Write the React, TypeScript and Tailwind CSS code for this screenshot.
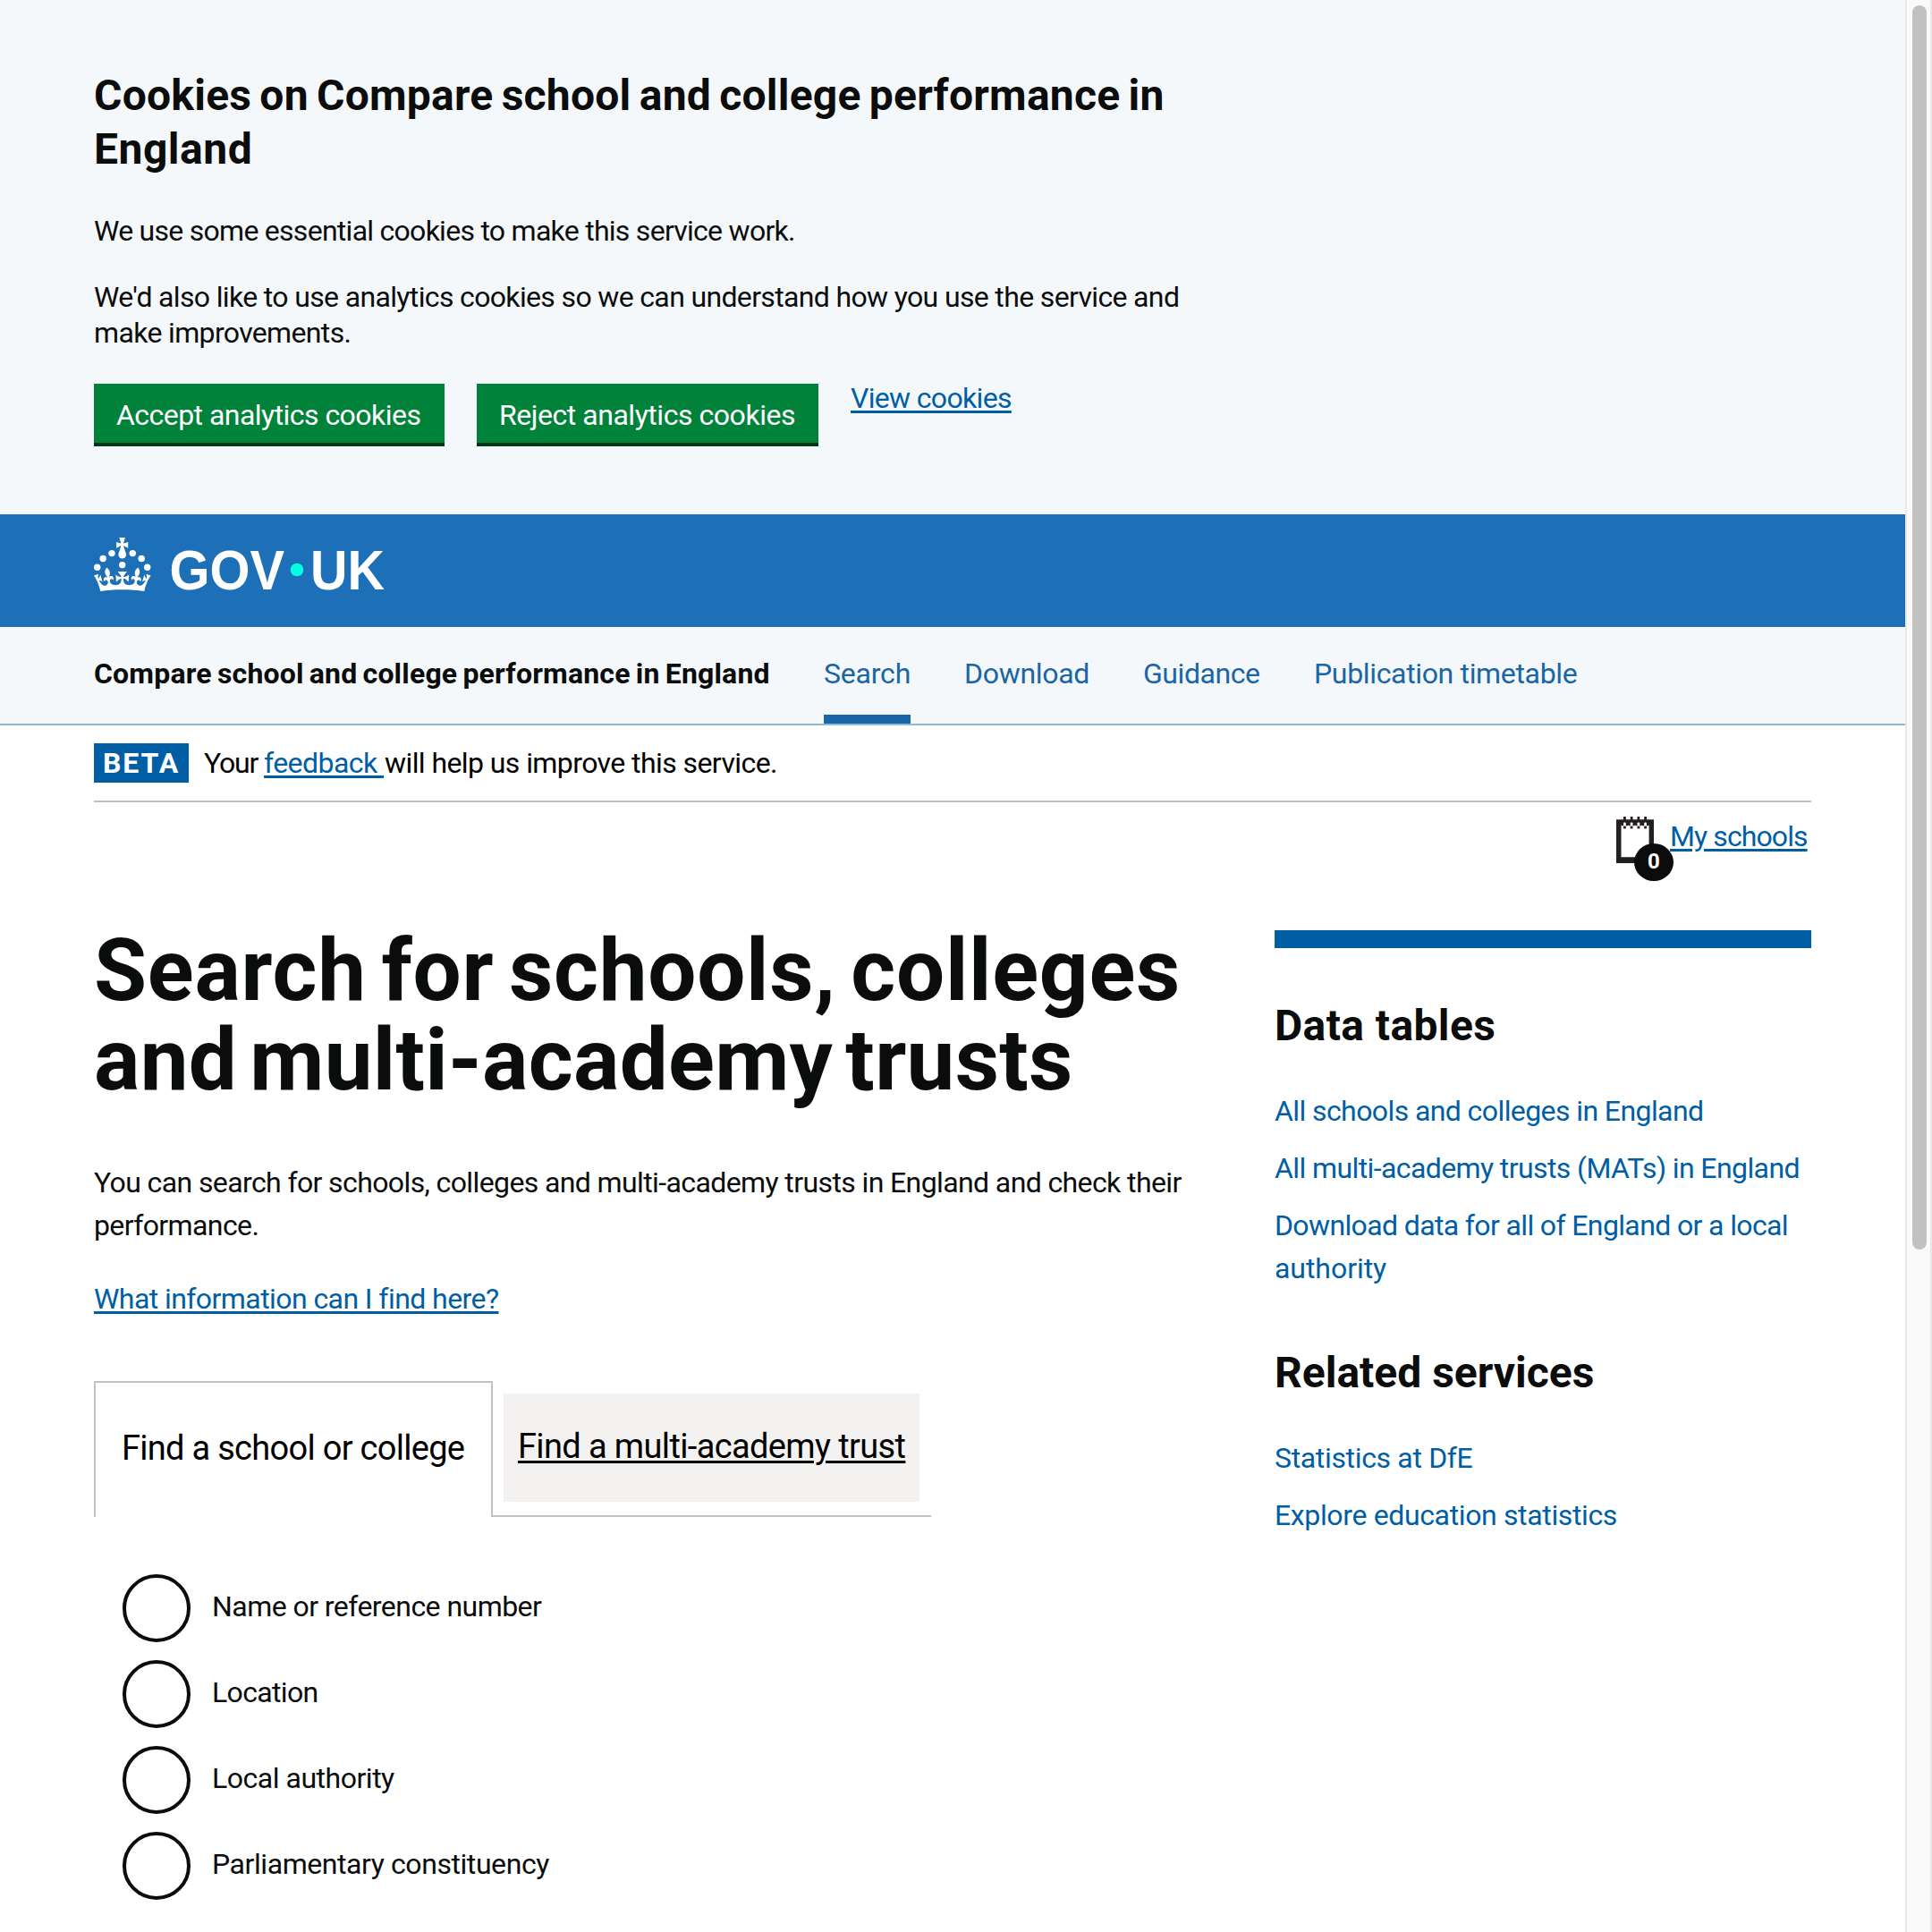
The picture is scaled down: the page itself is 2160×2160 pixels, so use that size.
import type { ReactNode } from "react";

function CookieBanner() {
  return (
    <section className="h-[575px] bg-[#f4f8fb] pt-[77px] pl-[105px] whitespace-nowrap">
      <h2 className="text-[48px] leading-[60px] font-bold">
        <span className="block tracking-[0.24px] [word-spacing:-3px]">Cookies on Compare school and college performance in</span>
        <span className="block tracking-[0.5px]">England</span>
      </h2>
      <p className="mt-[41px] leading-[40px] tracking-[-0.73px]">We use some essential cookies to make this service work.</p>
      <p className="mt-[34px] leading-[40px] tracking-[-0.65px]">
        We'd also like to use analytics cookies so we can understand how you use the service and
        <br />
        make improvements.
      </p>
      <div className="mt-[37px] flex items-start gap-9">
        <button className="h-[70px] w-[392px] border-b-4 border-[#003618] bg-[#00823b] pt-[3px] pl-[25px] text-left leading-[40px] tracking-[-0.54px] text-white">
          Accept analytics cookies
        </button>
        <button className="h-[70px] w-[382px] border-b-4 border-[#003618] bg-[#00823b] pt-[3px] pl-[25px] text-left leading-[40px] tracking-[-0.46px] text-white">
          Reject analytics cookies
        </button>
        <a className="leading-[32px] tracking-[-0.67px] text-[#005ea5] underline decoration-3 underline-offset-[3px]">View cookies</a>
      </div>
    </section>
  );
}

function Logo() {
  return (
    <svg width="328" height="60" viewBox="0 0 328 60" fill="#fff" className="overflow-visible">
      <circle cx="20" cy="17.6" r="3.7" />
      <circle cx="10.2" cy="23.5" r="3.7" />
      <circle cx="3.7" cy="33.2" r="3.7" />
      <circle cx="31.7" cy="30.6" r="3.7" />
      <circle cx="43.3" cy="17.6" r="3.7" />
      <circle cx="53.2" cy="23.5" r="3.7" />
      <circle cx="59.7" cy="33.2" r="3.7" />
      <path d="M33.1,9.8c.2-.1.3-.3.5-.5l4.6,2.4v-6.8l-4.6,1.5c-.1-.2-.3-.3-.5-.5l1.9-5.9h-6.7l1.9,5.9c-.2.1-.3.3-.5.5l-4.6-1.5v6.8l4.6-2.4c.1.2.3.3.5.5l-2.6,8c-.9,2.8,1.2,5.7,4.1,5.7h0c3,0,5.1-2.9,4.1-5.7l-2.6-8ZM37,37.9s-3.4,3.8-4.1,6.1c2.2,0,4.2-.5,6.4-2.8l-.7,8.5c-2-2.8-4.4-4.1-5.7-3.8.1,3.1.5,6.7,5.8,7.2,3.7.3,6.7-1.5,7-3.8.4-2.6-2-4.3-3.7-1.6-1.4-4.5,2.4-6.1,4.9-3.2-1.9-4.5-1.8-7.7,2.4-10.9,3,4,2.6,7.3-1.2,11.1,2.4-1.3,6.2,0,4,4.6-1.2-2.8-3.7-2.2-4.2.2-.3,1.7.7,3.7,3,4.2,1.9.3,4.7-.9,7-5.9-1.3,0-2.4.7-3.9,1.7l2.4-8c.6,2.3,1.4,3.7,2.2,4.5.6-1.6.5-2.8,0-5.3l5,1.8c-2.6,3.6-5.2,8.7-7.3,17.5-7.4-1.1-15.7-1.7-24.5-1.7h0c-8.8,0-17.1.6-24.5,1.7-2.1-8.9-4.7-13.9-7.3-17.5l5-1.8c-.5,2.5-.6,3.7,0,5.3.8-.8,1.6-2.3,2.2-4.5l2.4,8c-1.5-1-2.6-1.7-3.9-1.7,2.3,5,5.2,6.2,7,5.9,2.3-.4,3.3-2.4,3-4.2-.5-2.4-3-3.1-4.2-.2-2.2-4.6,1.6-6,4-4.6-3.7-3.7-4.2-7.1-1.2-11.1,4.2,3.2,4.3,6.4,2.4,10.9,2.5-2.8,6.3-1.3,4.9,3.2-1.8-2.7-4.1-1-3.7,1.6.3,2.3,3.3,4.1,7,3.8,5.4-.5,5.7-4.2,5.8-7.2-1.3-.2-3.7,1-5.7,3.8l-.7-8.5c2.2,2.3,4.2,2.7,6.4,2.8-.7-2.3-4.1-6.1-4.1-6.1h10.6Z" />
      <text x="84.5" y="58" textLength="128.5" lengthAdjust="spacingAndGlyphs" className="font-['Liberation_Sans',sans-serif] text-[63px] font-bold">GOV</text>
      <circle cx="227" cy="36" r="7.3" fill="#00ffe0" />
      <text x="242" y="58" textLength="83" lengthAdjust="spacingAndGlyphs" className="font-['Liberation_Sans',sans-serif] text-[63px] font-bold">UK</text>
    </svg>
  );
}

function ServiceNav() {
  return (
    <nav className="flex h-[110px] gap-[60px] border-b-2 border-[#8eb8dc] bg-[#f4f8fb] pl-[105px] leading-[40px] whitespace-nowrap text-[#1a65a6]">
      <span className="w-[756px] pt-[32px] font-bold tracking-[0.18px] text-[#0b0c0c] [word-spacing:-2px]">Compare school and college performance in England</span>
      <a className="w-[97px] border-b-10 border-[#1a65a6] pt-[32px] tracking-[-0.2px]">Search</a>
      <a className="w-[140px] pt-[32px] tracking-[-0.3px]">Download</a>
      <a className="w-[131px] pt-[32px] tracking-[-0.44px]">Guidance</a>
      <a className="pt-[32px] tracking-[-0.34px]">Publication timetable</a>
    </nav>
  );
}

function Notebook() {
  return (
    <svg width="42" height="52" viewBox="0 0 42 52" className="block">
      <path d="M0 3.3H42V52H0ZM5.5 9.5V45.2H36.6V9.5Z" fill="#231f20" fillRule="evenodd" />
      {[9.3, 17, 24.8, 32.5].map((x) => (
        <g key={x}>
          <rect x={x - 1.3} y="0" width="2.8" height="5" fill="#231f20" />
          <rect x={x - 3.4} y="7" width="7" height="3.2" fill="#231f20" />
          <rect x={x - 1.3} y="6.6" width="2.8" height="4.2" rx="1" fill="#fff" />
          <rect x={x - 1.3} y="10.6" width="2.8" height="2.8" fill="#231f20" />
        </g>
      ))}
    </svg>
  );
}

function Tabs() {
  return (
    <div className="mt-[68px] flex h-[152px] text-[38px] leading-[48px] text-black">
      <div className="w-[446px] border-x-2 border-t-2 border-[#bfc1c3] pt-[49px] pl-[29px] tracking-[-0.71px]">Find a school or college</div>
      <div className="w-[490px] border-b-2 border-[#bfc1c3] pt-[14px] pl-[12px]">
        <div className="h-[121px] w-[465px] bg-[#f3f2f1] pt-[35px] pl-[16px] tracking-[-0.63px]">
          <a className="underline decoration-3 underline-offset-[3px]">Find a multi-academy trust</a>
        </div>
      </div>
    </div>
  );
}

function Radio({ children }: { children: ReactNode }) {
  return (
    <label className="flex h-[76px] gap-6">
      <span className="size-[76px] rounded-full border-4 border-[#0b0c0c]" />
      <span className="pt-[16px] leading-[40px]">{children}</span>
    </label>
  );
}

function Sidebar() {
  return (
    <aside className="mt-[6px] w-[600px] border-t-20 border-[#005ea5] leading-[48px] text-[#005ea5]">
      <h2 className="mt-[57px] text-[48px] leading-[60px] font-bold tracking-[0.4px] text-[#0b0c0c]">Data tables</h2>
      <ul className="mt-[41px] flex flex-col gap-4">
        <li className="tracking-[-0.59px]">All schools and colleges in England</li>
        <li className="tracking-[-0.6px]">All multi-academy trusts (MATs) in England</li>
        <li>
          <span className="block tracking-[-0.63px]">Download data for all of England or a local</span>
          <span className="block tracking-[-0.05px]">authority</span>
        </li>
      </ul>
      <h2 className="mt-[63px] text-[48px] leading-[60px] font-bold text-[#0b0c0c]">Related services</h2>
      <ul className="mt-[41px] flex flex-col gap-4">
        <li className="tracking-[-0.34px]">Statistics at DfE</li>
        <li className="tracking-[-0.36px]">Explore education statistics</li>
      </ul>
    </aside>
  );
}

export default function App() {
  return (
    <div className="flex h-[2160px] overflow-hidden bg-white font-['Roboto',sans-serif] text-[32px] text-[#0b0c0c]">
      <div className="w-[2130px]">
        <CookieBanner />
        <header className="h-[126px] bg-[#1d70b8] pt-[26px] pl-[105px]">
          <Logo />
        </header>
        <ServiceNav />
        <div className="mx-[105px] w-[1920px]">
          <div className="flex h-[86px] items-start border-b-2 border-[#bfbfbf] pt-[20px] leading-[44px] whitespace-pre text-black">
            <strong className="w-[106px] bg-[#005ea5] pl-[10px] tracking-[1.94px] text-white">BETA</strong>
            <span className="ml-[17px] w-[67px] tracking-[-1.2px]">Your</span>
            <a className="w-[135px] tracking-[-0.55px] text-[#005ea5] underline decoration-3 underline-offset-[3px]">{"feedback "}</a>
            <span className="tracking-[-0.58px]">will help us improve this service.</span>
          </div>
          <div className="flex h-[137px] justify-end pt-[18px] pr-[4px]">
            <div className="relative mr-[18px] -mt-[2px]">
              <Notebook />
              <span className="absolute top-[30px] left-[20px] flex h-[42px] w-[44px] items-center justify-center rounded-[50%] bg-[#0b0c0c] pb-[3px] text-[24px] leading-none font-bold text-white">0</span>
            </div>
            <a className="relative w-[154px] leading-[40px] tracking-[-0.91px] whitespace-nowrap text-[#005ea5] underline decoration-3 underline-offset-[3px]">My schools</a>
          </div>
          <main className="flex justify-between whitespace-nowrap">
            <div>
              <h1 className="pt-[1px] text-[96px] leading-[100px] font-bold">
                <span className="block tracking-[0.74px] [word-spacing:-8px]">Search for schools, colleges</span>
                <span className="block tracking-[0.29px] [word-spacing:-10px]">and multi-academy trusts</span>
              </h1>
              <p className="mt-[63px] leading-[48px] tracking-[-0.61px]">
                You can search for schools, colleges and multi-academy trusts in England and check their
                <br />
                performance.
              </p>
              <p className="mt-[34px] leading-[48px]">
                <a className="tracking-[-0.57px] text-[#005ea5] underline decoration-3 underline-offset-[3px]">What information can I find here?</a>
              </p>
              <Tabs />
              <div className="mt-[64px] ml-[32px] flex flex-col gap-5">
                <Radio><span className="tracking-[-0.55px]">Name or reference number</span></Radio>
                <Radio><span className="tracking-[-0.65px]">Location</span></Radio>
                <Radio><span className="tracking-[-0.48px]">Local authority</span></Radio>
                <Radio><span className="tracking-[-0.43px]">Parliamentary constituency</span></Radio>
              </div>
            </div>
            <Sidebar />
          </main>
        </div>
      </div>
      <div className="h-full w-[30px] border-r-2 border-l-2 border-[#e8e8e8] bg-[#fafafa] pt-[6px] pl-[6px]">
        <div className="h-[1391px] w-[16px] rounded-full bg-[#c1c1c1]" />
      </div>
    </div>
  );
}
